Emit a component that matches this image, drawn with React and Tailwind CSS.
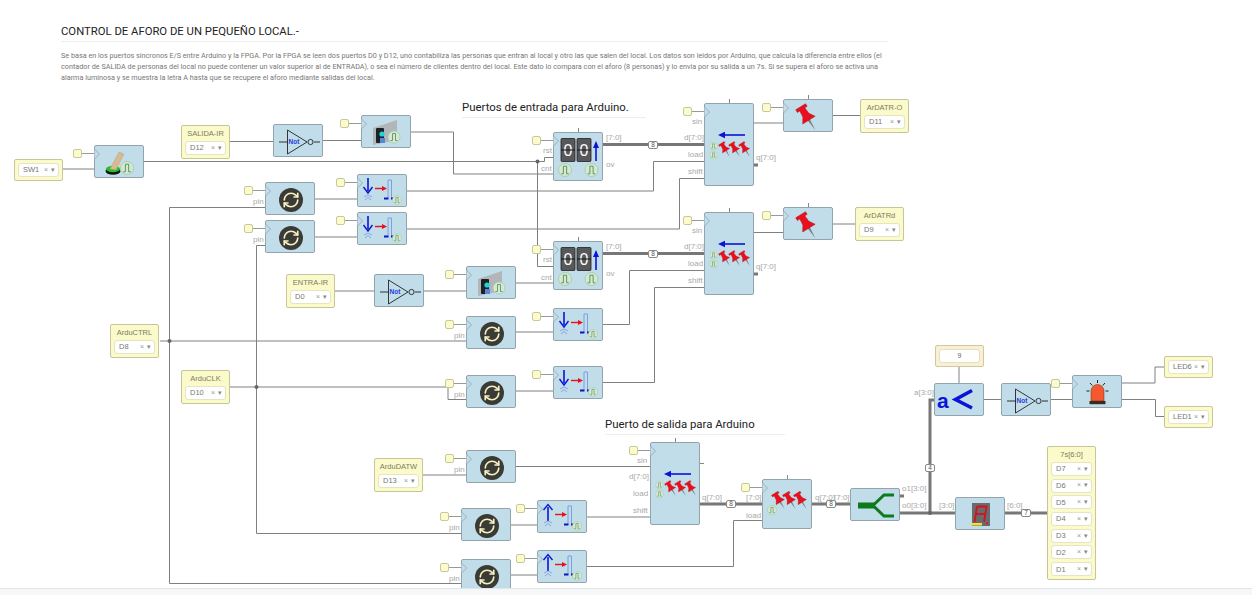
import React from "react";

const BLUE = "#0a14d8";
const RED = "#e8101c";

// wires: [points]
const wires = [
  ["63,169 94,169"],
  ["143,161.5 544.5,161.5 544.5,157.5 553,157.5"],
  ["537.5,161.5 537.5,266.5 553,266.5"],
  ["230,141.5 273,141.5"],
  ["322,140.5 361,140.5"],
  ["410,132 453.5,132 453.5,174 553,174"],
  ["314,199 357,199"],
  ["314,237 357,237"],
  ["406,191 653.5,191 653.5,161.5 704,161.5"],
  ["406,229 679.5,229 679.5,178.5 704,178.5"],
  ["265,207.5 169.5,207.5 169.5,583.5 461,583.5"],
  ["265,245.5 256.5,245.5 256.5,533.5 461,533.5"],
  ["754,123 783,123"],
  ["832,115.5 860,115.5"],
  ["754,232.5 783,232.5"],
  ["832,224 855,224"],
  ["335,291 374,291"],
  ["423,291 466,291"],
  ["516,283 553,283"],
  ["603,324.5 629.5,324.5 629.5,270.5 704,270.5"],
  ["603,382.5 654.5,382.5 654.5,287.5 704,287.5"],
  ["516,332 553,332"],
  ["516,391 553,391"],
  ["160,341 466,341"],
  ["230,387 448,387 448,399.5 466,399.5"],
  ["423,475 466,475"],
  ["516,466.5 650,466.5"],
  ["510,525 537,525"],
  ["510,575 537,575"],
  ["587,517 650,517"],
  ["587,566.5 733.5,566.5 733.5,520.5 762,520.5"],
  ["959,366 959,383"],
  ["984,399.5 1001,399.5"],
  ["1051,399.5 1072,399.5"],
  ["1122,383 1155,383 1155,367 1164,367"],
  ["1122,399.5 1155.5,399.5 1155.5,416.5 1164,416.5"],
];

const buses = [
  "603,144.5 704,144.5",
  "603,253.5 704,253.5",
  "754,165 758,165",
  "754,274 758,274",
  "700,504 762,504",
  "812,504 850,504",
  "900,496 904,496",
  "900,513 955,513",
  "930,513 930,400 934,400",
  "1005,513 1047,513",
];

const dots = [
  [537.5, 161.5],
  [169.5, 341],
  [256.5, 387],
  [930, 513],
];

function Pulse({ x, y, r = 6 }) {
  const s = r / 6;
  return (
    <g transform={`translate(${x} ${y}) scale(${s})`}>
      <circle r="6" fill="#d5e8d2" stroke="#a8caa8" strokeWidth="0.8" />
      <path d="M-3.5 3.5H-1.5V-3.5H1.5V3.5H3.5" fill="none" stroke="#4b8a58" strokeWidth="0.8" />
    </g>
  );
}

function Pin({ x, y, s = 1 }) {
  return (
    <g transform={`translate(${x} ${y}) rotate(-32) scale(${s})`}>
      <path d="M-1.3 2L1.3 2L0 15Z" fill="#7d8285" />
      <path d="M-5.5 -11.5H5.5V-8.5H2.8L3.4 -2L7 3.5H-7L-3.4 -2L-2.8 -8.5H-5.5Z" fill={RED} stroke="#a80d16" strokeWidth="0.4" />
    </g>
  );
}

function ArrowLeft({ x1, x2, y }) {
  return (
    <g>
      <path d={`M${x1 + 5} ${y}H${x2}`} stroke={BLUE} strokeWidth="1.6" />
      <path d={`M${x1} ${y}L${x1 + 7} ${y - 3.2}V${y + 3.2}Z`} fill={BLUE} />
    </g>
  );
}

function SwitchIcon() {
  return (
    <svg className="absolute inset-0" width="50" height="33">
      <ellipse cx="18" cy="25" rx="7.5" ry="3.8" fill="#111" />
      <ellipse cx="18" cy="23" rx="7" ry="3.2" fill="#22c02a" />
      <path d="M15 23L24 6L29 8L21 24Z" fill="#d9b98f" stroke="#b89a72" strokeWidth="0.4" />
      <Pulse x={32} y={22} r={6.5} />
    </svg>
  );
}

function NotIcon() {
  return (
    <svg className="absolute inset-0" width="50" height="33">
      <path d="M5 17H14M40 17H46" stroke="#333" strokeWidth="1" />
      <path d="M13.5 5L33 17L13.5 29Z" fill="none" stroke="#222" strokeWidth="0.9" />
      <circle cx="36.5" cy="17" r="2.6" fill="#c0dde9" stroke="#222" strokeWidth="0.9" />
      <text x="20" y="19.3" fontSize="6.5" fontWeight="700" fill="#2a3ad8" fontFamily="Liberation Sans, sans-serif" textAnchor="middle">Not</text>
    </svg>
  );
}

function SensorIcon() {
  return (
    <svg className="absolute inset-0" width="50" height="33">
      <path d="M11 12L35 4V24L11 29Z" fill="#b3b6b8" />
      <rect x="14" y="12" width="8" height="15" rx="1" fill="#1c2126" />
      <circle cx="20" cy="18" r="2.6" fill="#1fd3d6" />
      <rect x="18" y="22" width="5" height="5" fill="#5a86d8" />
      <Pulse x={32} y={21} r={6} />
    </svg>
  );
}

function SyncIcon() {
  return (
    <svg className="absolute inset-0" width="50" height="33">
      <circle cx="25" cy="17" r="12" fill="#3b3b36" />
      <g transform="translate(16 8) scale(0.75)" fill="none" stroke="#f6f0c4" strokeWidth="2.2" strokeLinecap="round" strokeLinejoin="round">
        <path d="M3 12a9 9 0 0 1 9-9 9.75 9.75 0 0 1 6.74 2.74L21 8" />
        <path d="M21 3v5h-5" />
        <path d="M21 12a9 9 0 0 1-9 9 9.75 9.75 0 0 1-6.74-2.74L3 16" />
        <path d="M8 16H3v5" />
      </g>
    </svg>
  );
}

function EdgeIcon({ up }) {
  return (
    <svg className="absolute inset-0" width="50" height="33">
      {up ? (
        <g>
          <path d="M10 6V20" stroke={BLUE} strokeWidth="1.6" />
          <path d="M5.5 9L10 3.5L14.5 9" fill="none" stroke={BLUE} strokeWidth="1.4" />
        </g>
      ) : (
        <g>
          <path d="M10 3V16" stroke={BLUE} strokeWidth="1.6" />
          <path d="M5.5 12L10 18L14.5 12" fill="none" stroke={BLUE} strokeWidth="1.4" />
        </g>
      )}
      <path d="M6 22L10 20L14 22M7 25L10 22.5L13 25" fill="none" stroke="#7d93e0" strokeWidth="0.8" />
      <path d="M17 13.5H25" stroke={RED} strokeWidth="1.4" />
      <path d="M29 13.5L24 11V16Z" fill={RED} />
      <path d="M30 23V5H33.5V23" fill="none" stroke="#7d9ee0" strokeWidth="1" />
      <path d="M26 23.5H30.5M33 23.5H37" stroke="#0a14c8" strokeWidth="2" />
      <Pulse x={39} y={25} r={4.5} />
    </svg>
  );
}

function CounterIcon() {
  return (
    <svg className="absolute inset-0" width="50" height="49">
      {[7, 23].map((x) => (
        <g key={x}>
          <rect x={x} y="5.5" width="14" height="23" rx="1" fill="#58585a" stroke="#222" strokeWidth="0.8" />
          <text x={x + 7} y="22.5" fontSize="16" fill="#fff" fontFamily="Liberation Sans, sans-serif" textAnchor="middle">0</text>
          <path d={`M${x} 17H${x + 14}`} stroke="#111" strokeWidth="1" />
        </g>
      ))}
      <path d="M42 28V12" stroke={BLUE} strokeWidth="1.6" />
      <path d="M42 8L45 15H39Z" fill={BLUE} />
      <Pulse x={11} y={37} r={6.5} />
      <Pulse x={37.5} y={37} r={6.5} />
    </svg>
  );
}

function ShiftIcon() {
  return (
    <svg className="absolute inset-0" width="50" height="83">
      <ArrowLeft x1={13} x2={40} y={31} />
      <Pulse x={8.5} y={42} r={3.8} />
      <Pulse x={8.5} y={51} r={3.8} />
      <Pin x={20} y={45} s={0.6} />
      <Pin x={30} y={45} s={0.6} />
      <Pin x={40} y={45} s={0.6} />
    </svg>
  );
}

function RegIcon() {
  return (
    <svg className="absolute inset-0" width="50" height="50">
      <Pulse x={9} y={30} r={4.5} />
      <Pin x={16} y={20} s={0.7} />
      <Pin x={27} y={20} s={0.7} />
      <Pin x={38} y={20} s={0.7} />
    </svg>
  );
}

function PinIcon() {
  return (
    <svg className="absolute inset-0" width="50" height="33">
      <Pin x={23} y={17} s={1.05} />
    </svg>
  );
}

function SplitIcon() {
  return (
    <svg className="absolute inset-0" width="50" height="33">
      <path d="M7 16.5H24" stroke="#0d7a1c" strokeWidth="6" />
      <path d="M22 16.5L33 6H43M22 16.5L33 27H43" fill="none" stroke="#0d7a1c" strokeWidth="3" />
    </svg>
  );
}

function LessIcon() {
  return (
    <svg className="absolute inset-0" width="50" height="33">
      <text x="2" y="24" fontSize="21" fontWeight="700" fill={BLUE} fontFamily="Liberation Sans, sans-serif">a</text>
      <path d="M37 6.5L20.5 15.5L37 24" fill="none" stroke={BLUE} strokeWidth="3.6" />
    </svg>
  );
}

function SegIcon() {
  return (
    <svg className="absolute inset-0" width="50" height="33">
      <rect x="16" y="5" width="18" height="23" fill="#6b6b6e" />
      <g fill="none" stroke="#d0141e" strokeWidth="1.8">
        <path d="M21 8.5H30.5L28 24" />
        <path d="M21 8.5L18.5 24" />
        <path d="M19.8 16H29.3" />
      </g>
      <rect x="15" y="25" width="11" height="2.5" fill="#f2e12c" />
      <circle cx="31" cy="25.5" r="1.1" fill="#e8101c" />
    </svg>
  );
}

function AlarmIcon() {
  return (
    <svg className="absolute inset-0" width="50" height="33">
      <path d="M18 25V15A6.5 6.5 0 0 1 31 15V25Z" fill="#f4582e" stroke="#7a2a12" strokeWidth="0.5" />
      <rect x="16.5" y="25" width="16" height="3.2" fill="#3a2a24" />
      <path d="M24.5 4V7M17 7L19.3 9.5M32 7L29.7 9.5M13.5 15H16.5M32.5 15H35.5" stroke="#222" strokeWidth="1" />
    </svg>
  );
}

// a blue block, with an optional clock pin on its left and a stub on top
function Block({ pos, clock, stub, children }) {
  return (
    <div className={`absolute ${pos} w-[50px] rounded-[2px] border border-[#94a4ad] bg-[#c0dde9]`}>
      {children}
      {clock && (
        <>
          <div className="absolute left-[-22px] top-[3px] h-[9px] w-[9px] rounded-[2px] border border-[#c9c899] bg-[#fbfbcc]"></div>
          <div className="absolute left-[-13px] top-[7px] h-px w-[13px] bg-[#999]"></div>
          <svg className="absolute left-[-1px] top-[2px]" width="7" height="12">
            <path d="M0.5 1L5.5 6L0.5 11" fill="#c0dde9" stroke="#94a4ad" strokeWidth="0.8" />
          </svg>
        </>
      )}
      {stub && <div className="absolute left-[24px] top-[-5px] h-[4px] w-px bg-[#888]"></div>}
    </div>
  );
}

function Sel({ text }) {
  return (
    <div className="flex h-[14px] items-center rounded-[3px] border border-[#e6e4c2] bg-white pl-[4px] pr-[3px] text-[7.5px] text-[#777]">
      <span className="flex-1">{text}</span>
      <span className="mr-[3px] text-[7px] text-[#999]">×</span>
      <span className="text-[7px] text-[#888]">▾</span>
    </div>
  );
}

function YBox({ pos, label, sels }) {
  return (
    <div className={`absolute ${pos} w-[49px] rounded-[2px] border border-[#c8c699] bg-[#fbfacb] p-[3px] font-["Liberation_Sans",sans-serif]`}>
      {label && <div className="mb-[2px] text-center text-[7.5px] leading-[10px] text-[#7d7d60]">{label}</div>}
      <div className="flex flex-col gap-[2.7px]">
        {sels.map((s) => (
          <Sel key={s} text={s} />
        ))}
      </div>
    </div>
  );
}

function Tag({ pos, children }) {
  return <span className={`absolute ${pos} whitespace-nowrap text-[8px] leading-[10px] text-[#a8a8a8]`}>{children}</span>;
}

function Size({ pos, children }) {
  return (
    <span className={`absolute ${pos} flex h-[8px] w-[10px] items-center justify-center rounded-[2px] border border-[#888] bg-white text-[6.5px] text-[#555]`}>
      {children}
    </span>
  );
}

function SubTitle({ pos, children }) {
  return (
    <div className={`absolute ${pos} border-b border-[#eeeeee] pb-[2px] font-["Roboto",sans-serif] text-[11.4px] leading-[16px] text-[#222]`}>
      {children}
    </div>
  );
}

export default function App() {
  return (
    <div className="relative h-[595px] w-full overflow-hidden bg-white font-['Liberation_Sans',sans-serif]">
      <div className="ml-[61px] w-[827px] pt-[24px] font-['Roboto',sans-serif]">
        <h1 className="border-b border-[#eeeeee] pb-[1px] text-[11.3px] leading-[16px] text-[#222]">
          CONTROL DE AFORO DE UN PEQUEÑO LOCAL.-
        </h1>
        <p className="mt-[8px] text-[7.25px] leading-[11px] text-[#777]">
          Se basa en los puertos sincronos E/S entre Arduino y la FPGA. Por la FPGA se leen dos puertos D0 y D12, uno contabiliza las personas que entran al local y otro las que salen del local. Los datos son leidos por Arduino, que calcula la diferencia entre ellos (el contador de SALIDA de personas del local no puede contener un valor superior al de ENTRADA), o sea el número de clientes dentro del local. Este dato lo compara con el aforo (8 personas) y lo envia por su salida a un 7s. Si se supera el aforo se activa una alarma luminosa y se muestra la letra A hasta que se recupere el aforo mediante salidas del local.
        </p>
      </div>

      <svg className="absolute left-0 top-0" width="1252" height="595" fill="none">
        {wires.map(([pts]) => (
          <polyline key={pts} points={pts} stroke="#808080" strokeWidth="1" />
        ))}
        {buses.map((pts) => (
          <polyline key={pts} points={pts} stroke="#777" strokeWidth="3" />
        ))}
        {dots.map(([x, y]) => (
          <circle key={x} cx={x} cy={y} r="2" fill="#666" />
        ))}
      </svg>

      <SubTitle pos="left-[462px] top-[99px] w-[184px]">Puertos de entrada para Arduino.</SubTitle>
      <SubTitle pos="left-[605px] top-[416px] w-[180px]">Puerto de salida para Arduino</SubTitle>

      <YBox pos="left-[14px] top-[159px]" sels={["SW1"]} />
      <YBox pos="left-[181px] top-[125px]" label="SALIDA-IR" sels={["D12"]} />
      <YBox pos="left-[286px] top-[274px]" label="ENTRA-IR" sels={["D0"]} />
      <YBox pos="left-[110px] top-[324px]" label="ArduCTRL" sels={["D8"]} />
      <YBox pos="left-[181px] top-[370px]" label="ArduCLK" sels={["D10"]} />
      <YBox pos="left-[374px] top-[458px]" label="ArduDATW" sels={["D13"]} />
      <YBox pos="left-[860px] top-[99px]" label="ArDATR-O" sels={["D11"]} />
      <YBox pos="left-[855px] top-[207px]" label="ArDATRd" sels={["D9"]} />
      <YBox pos="left-[1164px] top-[356px]" sels={["LED6"]} />
      <YBox pos="left-[1164px] top-[406px]" sels={["LED1"]} />
      <YBox pos="left-[1047px] top-[446px]" label="7s[6:0]" sels={["D7", "D6", "D5", "D4", "D3", "D2", "D1"]} />

      <div className="absolute left-[935px] top-[345px] w-[49px] rounded-[2px] border border-[#d3c89c] bg-[#f7f0d4] p-[3px]">
        <div className="flex h-[14px] items-center justify-center rounded-[3px] border border-[#e6e0c2] bg-white text-[7px] text-[#666]">9</div>
      </div>

      <Block pos="left-[94px] top-[145px] h-[33px]" clock><SwitchIcon /></Block>
      <Block pos="left-[273px] top-[124px] h-[33px]"><NotIcon /></Block>
      <Block pos="left-[361px] top-[115px] h-[33px]" clock><SensorIcon /></Block>
      <Block pos="left-[265px] top-[182px] h-[33px]" clock><SyncIcon /></Block>
      <Block pos="left-[265px] top-[220px] h-[33px]" clock><SyncIcon /></Block>
      <Block pos="left-[357px] top-[174px] h-[33px]" clock><EdgeIcon /></Block>
      <Block pos="left-[357px] top-[212px] h-[33px]" clock><EdgeIcon /></Block>

      <Block pos="left-[553px] top-[132px] h-[49px]" clock stub><CounterIcon /></Block>
      <Block pos="left-[553px] top-[241px] h-[49px]" clock stub><CounterIcon /></Block>
      <Block pos="left-[704px] top-[103px] h-[83px]" clock stub><ShiftIcon /></Block>
      <Block pos="left-[704px] top-[212px] h-[83px]" clock stub><ShiftIcon /></Block>
      <Block pos="left-[783px] top-[99px] h-[33px]" clock stub><PinIcon /></Block>
      <Block pos="left-[783px] top-[207px] h-[33px]" clock stub><PinIcon /></Block>

      <Block pos="left-[374px] top-[274px] h-[33px]"><NotIcon /></Block>
      <Block pos="left-[466px] top-[266px] h-[33px]" clock><SensorIcon /></Block>
      <Block pos="left-[466px] top-[316px] h-[33px]" clock><SyncIcon /></Block>
      <Block pos="left-[466px] top-[375px] h-[33px]" clock><SyncIcon /></Block>
      <Block pos="left-[553px] top-[308px] h-[33px]" clock><EdgeIcon /></Block>
      <Block pos="left-[553px] top-[366px] h-[33px]" clock><EdgeIcon /></Block>

      <Block pos="left-[466px] top-[450px] h-[33px]" clock><SyncIcon /></Block>
      <Block pos="left-[461px] top-[508px] h-[33px]" clock><SyncIcon /></Block>
      <Block pos="left-[461px] top-[559px] h-[33px]" clock><SyncIcon /></Block>
      <Block pos="left-[537px] top-[500px] h-[33px]" clock><EdgeIcon up /></Block>
      <Block pos="left-[537px] top-[550px] h-[33px]" clock><EdgeIcon up /></Block>
      <Block pos="left-[650px] top-[442px] h-[83px]" clock stub>
        <ShiftIcon />
        <div className="absolute left-[49px] top-[20px] h-px w-[4px] bg-[#888]"></div>
      </Block>
      <Block pos="left-[762px] top-[479px] h-[50px]" clock stub><RegIcon /></Block>
      <Block pos="left-[850px] top-[488px] h-[33px]"><SplitIcon /></Block>
      <Block pos="left-[955px] top-[497px] h-[33px]"><SegIcon /></Block>
      <Block pos="left-[934px] top-[383px] h-[33px]"><LessIcon /></Block>
      <Block pos="left-[1001px] top-[383px] h-[33px]"><NotIcon /></Block>
      <Block pos="left-[1072px] top-[375px] h-[33px]" clock><AlarmIcon /></Block>

      <Tag pos="left-[253px] top-[197px]">pin</Tag>
      <Tag pos="left-[253px] top-[235px]">pin</Tag>
      <Tag pos="left-[454px] top-[331px]">pin</Tag>
      <Tag pos="left-[454px] top-[390px]">pin</Tag>
      <Tag pos="left-[454px] top-[465px]">pin</Tag>
      <Tag pos="left-[449px] top-[523px]">pin</Tag>
      <Tag pos="left-[449px] top-[574px]">pin</Tag>

      <Tag pos="left-[606px] top-[133px]">[7:0]</Tag>
      <Tag pos="left-[543px] top-[146px]">rst</Tag>
      <Tag pos="left-[541px] top-[164px]">cnt</Tag>
      <Tag pos="left-[606px] top-[160px]">ov</Tag>
      <Tag pos="left-[606px] top-[242px]">[7:0]</Tag>
      <Tag pos="left-[543px] top-[255px]">rst</Tag>
      <Tag pos="left-[541px] top-[273px]">cnt</Tag>
      <Tag pos="left-[606px] top-[269px]">ov</Tag>

      <Tag pos="left-[692px] top-[117px]">sin</Tag>
      <Tag pos="left-[684px] top-[133px]">d[7:0]</Tag>
      <Tag pos="left-[688px] top-[150px]">load</Tag>
      <Tag pos="left-[688px] top-[167px]">shift</Tag>
      <Tag pos="left-[756px] top-[153px]">q[7:0]</Tag>
      <Tag pos="left-[692px] top-[226px]">sin</Tag>
      <Tag pos="left-[684px] top-[242px]">d[7:0]</Tag>
      <Tag pos="left-[688px] top-[259px]">load</Tag>
      <Tag pos="left-[688px] top-[276px]">shift</Tag>
      <Tag pos="left-[756px] top-[262px]">q[7:0]</Tag>

      <Tag pos="left-[637px] top-[456px]">sin</Tag>
      <Tag pos="left-[629px] top-[472px]">d[7:0]</Tag>
      <Tag pos="left-[633px] top-[489px]">load</Tag>
      <Tag pos="left-[633px] top-[506px]">shift</Tag>
      <Tag pos="left-[702px] top-[493px]">q[7:0]</Tag>
      <Tag pos="left-[746px] top-[493px]">[7:0]</Tag>
      <Tag pos="left-[746px] top-[511px]">load</Tag>
      <Tag pos="left-[815px] top-[493px]">q[7:0]</Tag>
      <Tag pos="left-[834px] top-[493px]">[7:0]</Tag>
      <Tag pos="left-[902px] top-[484px]">o1[3:0]</Tag>
      <Tag pos="left-[902px] top-[501px]">o0[3:0]</Tag>
      <Tag pos="left-[939px] top-[501px]">[3:0]</Tag>
      <Tag pos="left-[914px] top-[388px]">a[3:0]</Tag>
      <Tag pos="left-[1007px] top-[501px]">[6:0]</Tag>

      <Size pos="left-[648px] top-[141px]">8</Size>
      <Size pos="left-[648px] top-[250px]">8</Size>
      <Size pos="left-[726px] top-[500px]">8</Size>
      <Size pos="left-[826px] top-[500px]">8</Size>
      <Size pos="left-[925px] top-[464px]">4</Size>
      <Size pos="left-[1021px] top-[509px]">7</Size>

      <div className="absolute inset-x-0 top-[588px] h-[7px] border-t border-[#e2e5e8] bg-[#f5f7f9]"></div>
    </div>
  );
}
